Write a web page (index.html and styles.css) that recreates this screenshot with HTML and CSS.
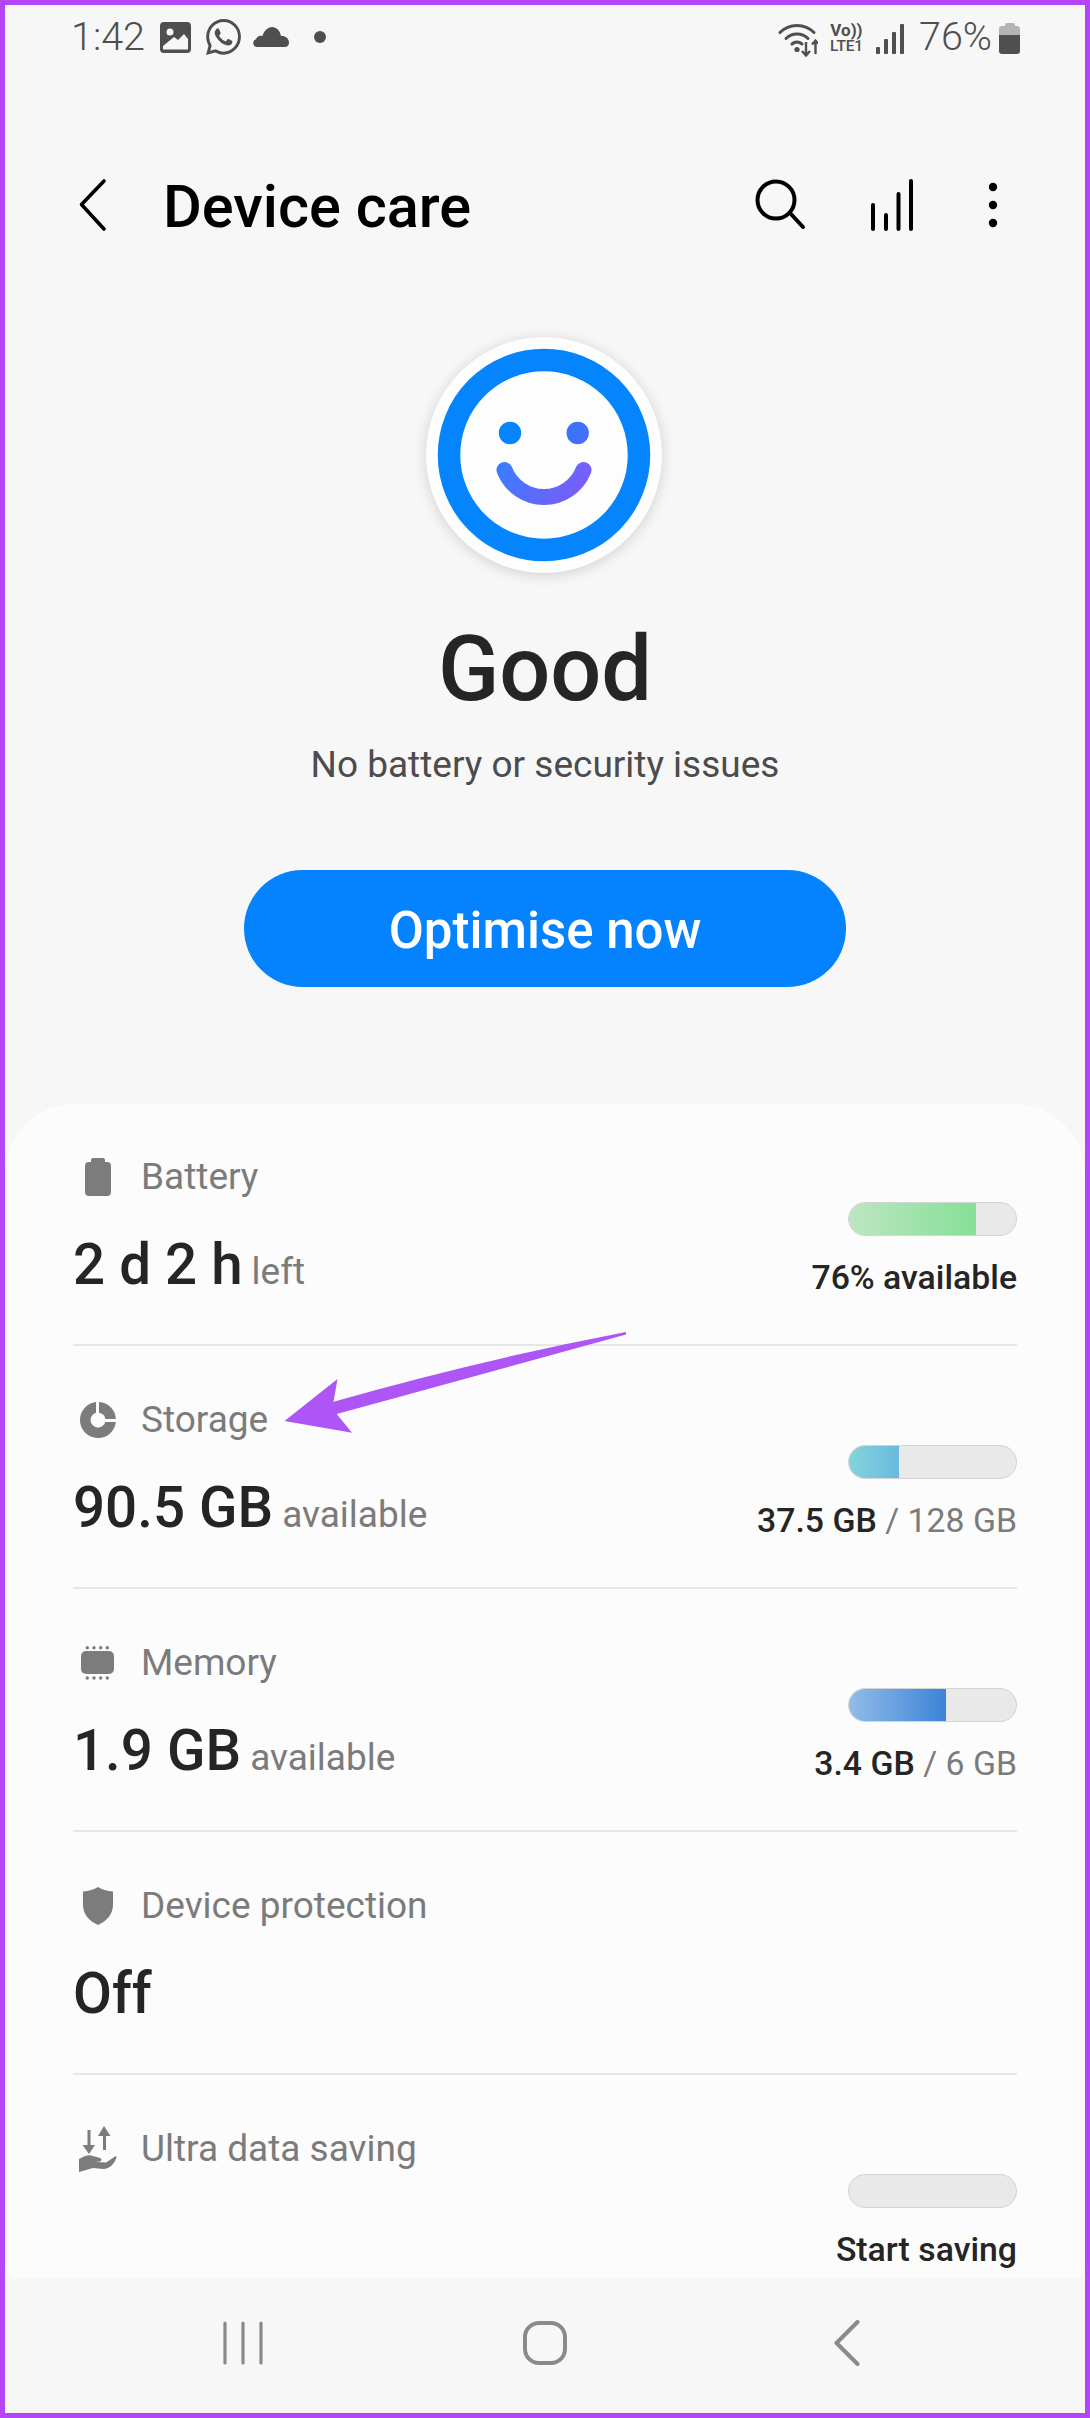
FILE: index.html
```html
<!DOCTYPE html>
<html lang="en">
<head>
<meta charset="utf-8">
<title>Device care</title>
<link rel="stylesheet" href="styles.css">
</head>
<body>
<div class="frame">
  <div class="status">
    <span class="clock">1:42</span>
    <svg class="st-image" width="31" height="31" viewBox="0 0 31 31"><path fill="#4f4f4f" fill-rule="evenodd" d="M4 0h23a4 4 0 0 1 4 4v23a4 4 0 0 1-4 4H4a4 4 0 0 1-4-4V4a4 4 0 0 1 4-4zM3 27.500h25V17l-4-5-6 6-4-3-11 9zM10 6.500a3.500 3.500 0 1 0 0 7 3.500 3.500 0 0 0 0-7z"/></svg>
    <svg class="st-wa" width="35" height="36" viewBox="0 0 24 24" preserveAspectRatio="none"><path fill="#4f4f4f" d="M17.472 14.382c-.297-.149-1.758-.867-2.03-.967-.273-.099-.471-.148-.67.15-.197.297-.767.966-.94 1.164-.173.199-.347.223-.644.075-.297-.15-1.255-.463-2.39-1.475-.883-.788-1.48-1.761-1.653-2.059-.173-.297-.018-.458.13-.606.134-.133.298-.347.446-.52.149-.174.198-.298.298-.497.099-.198.05-.371-.025-.52-.075-.149-.669-1.612-.916-2.207-.242-.579-.487-.5-.669-.51-.173-.008-.371-.01-.57-.01-.198 0-.52.074-.792.372-.272.297-1.04 1.016-1.04 2.479 0 1.462 1.065 2.875 1.213 3.074.149.198 2.096 3.2 5.077 4.487.709.306 1.262.489 1.694.625.712.227 1.36.195 1.871.118.571-.085 1.758-.719 2.006-1.413.248-.694.248-1.289.173-1.413-.074-.124-.272-.198-.57-.347m-5.421 7.403h-.004a9.87 9.87 0 01-5.031-1.378l-.361-.214-3.741.982.998-3.648-.235-.374a9.86 9.86 0 01-1.51-5.26c.001-5.45 4.436-9.884 9.888-9.884 2.64 0 5.122 1.03 6.988 2.898a9.825 9.825 0 012.893 6.994c-.003 5.45-4.437 9.884-9.885 9.884m8.413-18.297A11.815 11.815 0 0012.05 0C5.495 0 .16 5.335.157 11.892c0 2.096.547 4.142 1.588 5.945L.057 24l6.305-1.654a11.882 11.882 0 005.683 1.448h.005c6.554 0 11.89-5.335 11.893-11.893a11.821 11.821 0 00-3.48-8.413z"/></svg>
    <svg class="st-cloud" width="36" height="20" viewBox="0 0 36 20"><path fill="#4f4f4f" d="M4 20a4 4 0 0 1-1-7.800C4 9 7 8 9.500 9 11 3.500 15 0 19 0c4.500 0 8 3.500 9 9 4-.5 7.500 2 8 6 .3 3-1.500 5-4 5z"/></svg>
    <span class="st-dot"></span>
    <div class="status-right">
      <svg class="st-wifi" width="40" height="34" viewBox="0 0 40 34"><g fill="none" stroke="#4f4f4f" stroke-width="3" stroke-linecap="round"><path d="M2 9.500C11 0 27 0 36 9.500"/><path d="M8 15.500c6-6 16-6 22 0"/><path d="M14 21c3-2.600 7-2.600 10 0"/></g><circle cx="19" cy="26.500" r="2.600" fill="#4f4f4f"/><g fill="none" stroke="#4f4f4f" stroke-width="2.400"><path d="M28 19v13M24 28l4 4.500 4-4.500"/><path d="M37.500 31V18M34 21.500l3.500-4 2.500 3"/></g></svg>
      <div class="st-net"><span class="st-vo">Vo))</span><span class="st-lte">LTE1</span></div>
      <div class="st-signal"><i class="sb1"></i><i class="sb2"></i><i class="sb3"></i><i class="sb4"></i></div>
      <span class="pct">76%</span>
      <div class="st-batt"><span class="st-batt-cap"></span><span class="st-batt-body"></span></div>
    </div>
  </div>

  <div class="appbar">
    <svg class="ab-back" width="30" height="54" viewBox="0 0 30 54"><path d="M26 3 3.500 26.500 26 51" fill="none" stroke="#000" stroke-width="3.600" stroke-linecap="round" stroke-linejoin="round"/></svg>
    <h1 class="ab-title">Device care</h1>
    <div class="ab-actions">
      <svg width="52" height="52" viewBox="0 0 52 52"><circle cx="21" cy="21" r="18.500" fill="none" stroke="#000" stroke-width="4"/><path d="M35 34l13 14" stroke="#000" stroke-width="4" stroke-linecap="round"/></svg>
      <svg class="ab-bars" width="44" height="52" viewBox="0 0 44 52"><g stroke="#000" stroke-width="4" stroke-linecap="round"><path d="M3 26v24M16 36v14M28.500 15v35M41 2v48"/></g></svg>
      <svg class="ab-more" width="10" height="46" viewBox="0 0 10 46"><circle cx="5" cy="5" r="4.200"/><circle cx="5" cy="23" r="4.200"/><circle cx="5" cy="41" r="4.200"/></svg>
    </div>
  </div>

  <div class="hero">
    <div class="face">
      <svg width="236" height="236" viewBox="0 0 236 236">
        <defs>
          <linearGradient id="smile" gradientUnits="userSpaceOnUse" x1="70" y1="110" x2="170" y2="170">
            <stop offset="0" stop-color="#2f82ff"/>
            <stop offset="1" stop-color="#8a55fa"/>
          </linearGradient>
          <linearGradient id="eye" gradientUnits="userSpaceOnUse" x1="100" y1="90" x2="165" y2="100">
            <stop offset="0" stop-color="#0585fd"/>
            <stop offset="1" stop-color="#4f6cfc"/>
          </linearGradient>
        </defs>
        <circle cx="118" cy="118" r="95" fill="none" stroke="#0585fd" stroke-width="22.500"/>
        <circle cx="84" cy="96" r="11.200" fill="#0585fd"/>
        <circle cx="151.700" cy="96" r="11.200" fill="url(#eye)"/>
        <path d="M78.500 133A42.400 42.400 0 0 0 157.500 133" fill="none" stroke="url(#smile)" stroke-width="16" stroke-linecap="round"/>
      </svg>
    </div>
    <div class="hero-title">Good</div>
    <div class="hero-sub">No battery or security issues</div>
    <button class="cta" type="button">Optimise now</button>
  </div>

  <div class="card">
    <div class="row">
      <div class="info">
        <div class="head">
          <span class="ico"><svg width="26" height="38" viewBox="0 0 26 38"><path fill="#7c7c7c" d="M8 0h10a2 2 0 0 1 2 2v2h2a4 4 0 0 1 4 4v26a4 4 0 0 1-4 4H4a4 4 0 0 1-4-4V8a4 4 0 0 1 4-4h2V2a2 2 0 0 1 2-2z"/></svg></span>
          <span class="label">Battery</span>
        </div>
        <div class="value"><b>2 d 2 h</b><span>left</span></div>
      </div>
      <div class="meter">
        <div class="bar"><div class="fill fill-green bw-76"></div></div>
        <div class="meter-text"><b>76% available</b></div>
      </div>
    </div>

    <div class="row">
      <div class="info">
        <div class="head">
          <span class="ico"><svg width="36" height="36" viewBox="0 0 36 36"><path fill="#7c7c7c" d="M16 .100V10.700A7.500 7.500 0 1 0 25.300 20H35.900A18 18 0 1 1 16 .100z"/><path fill="#7c7c7c" d="M19 .100A17.500 17.500 0 0 1 35.800 17H25.300A7.500 7.500 0 0 0 19 10.700z"/></svg></span>
          <span class="label">Storage</span>
        </div>
        <div class="value"><b>90.5 GB</b><span>available</span></div>
      </div>
      <div class="meter">
        <div class="bar"><div class="fill fill-teal bw-30"></div></div>
        <div class="meter-text"><b>37.5 GB</b> / 128 GB</div>
      </div>
    </div>

    <div class="row">
      <div class="info">
        <div class="head">
          <span class="ico"><svg width="34" height="34" viewBox="0 0 34 34"><rect x="0" y="5" width="33" height="23" rx="5" fill="#7c7c7c"/><g fill="#7c7c7c"><circle cx="6.300" cy="1.700" r="1.700"/><circle cx="13" cy="1.700" r="1.700"/><circle cx="19.700" cy="1.700" r="1.700"/><circle cx="26.300" cy="1.700" r="1.700"/><circle cx="6.300" cy="32" r="1.700"/><circle cx="13" cy="32" r="1.700"/><circle cx="19.700" cy="32" r="1.700"/><circle cx="26.300" cy="32" r="1.700"/></g></svg></span>
          <span class="label">Memory</span>
        </div>
        <div class="value"><b>1.9 GB</b><span>available</span></div>
      </div>
      <div class="meter">
        <div class="bar"><div class="fill fill-blue bw-58"></div></div>
        <div class="meter-text"><b>3.4 GB</b> / 6 GB</div>
      </div>
    </div>

    <div class="row">
      <div class="info">
        <div class="head">
          <span class="ico"><svg width="30" height="38" viewBox="0 0 30 38"><path fill="#7c7c7c" d="M15 0c4 2.500 9 4 15 4.500V18c0 9-6 16-15 20C6 34 0 27 0 18V4.500C6 4 11 2.500 15 0z"/></svg></span>
          <span class="label">Device protection</span>
        </div>
        <div class="value"><b>Off</b></div>
      </div>
    </div>

    <div class="row">
      <div class="info">
        <div class="head">
          <span class="ico"><svg width="38" height="46" viewBox="0 0 38 46"><g fill="#7c7c7c"><path d="M8.500 4h3v15h4.500l-6 9-6.500-9h5z"/><path d="M25 0l6.500 10H27v14h-3V10h-5z"/><path d="M0 33l6-3c3-1.200 6-1 8 0l7 2c2 .6 2 3 0 3.500l-4 .5 10 .5 9-6c1-.6 1.800.2 1.400 1.200C36 36 33 40 29 42c-5 2-10 0-15 0l-14 4z"/></g></svg></span>
          <span class="label">Ultra data saving</span>
        </div>
      </div>
      <div class="meter">
        <div class="bar"></div>
        <div class="meter-text"><b>Start saving</b></div>
      </div>
    </div>
  </div>

  <div class="nav">
    <svg width="40" height="44" viewBox="0 0 40 44"><g stroke="#8a8a8a" stroke-width="3.200" stroke-linecap="round"><path d="M2 2v40M20 2v40M38 2v40"/></g></svg>
    <svg width="44" height="44" viewBox="0 0 44 44"><rect x="2" y="2" width="40" height="40" rx="14" fill="none" stroke="#8a8a8a" stroke-width="4"/></svg>
    <svg class="nav-back" width="26" height="46" viewBox="0 0 26 46"><path d="M23.500 2 2.500 23 23.500 44" fill="none" stroke="#8a8a8a" stroke-width="4" stroke-linecap="round" stroke-linejoin="round"/></svg>
  </div>

  <svg class="callout" width="350" height="110" viewBox="0 0 350 110"><path fill="#ae55f5" d="M346 2Q200 30 53.500 71.700L57.500 49 4.500 91 72 102.700 56.700 84Q210 42 346 4.500z"/></svg>
</div>
</body>
</html>
```

FILE: styles.css
```css
* { box-sizing: border-box; }
html, body { margin: 0; padding: 0; }
body { width: 1090px; height: 2418px; font-family: Roboto, "Liberation Sans", sans-serif; }

.frame {
  position: relative;
  width: 1090px;
  height: 2418px;
  border: 5px solid #b545fb;
  background: #f7f7f7;
  display: flex;
  flex-direction: column;
  overflow: hidden;
}

/* status bar */
.status {
  display: flex;
  align-items: center;
  height: 64px;
  padding: 0 65px 0 66px;
  color: #4f4f4f;
}
.clock { font-size: 39.500px; font-weight: 300; line-height: 40px; }
.st-image { margin-left: 15px; margin-top: 1px; }
.st-wa { margin-left: 15px; }
.st-cloud { margin-left: 12px; }
.st-dot { width: 12px; height: 12px; border-radius: 50%; background: #4f4f4f; margin-left: 25px; }
.status-right { display: flex; align-items: center; margin-left: auto; }
.st-wifi { margin-top: 5px; }
.st-net { display: flex; flex-direction: column; align-items: center; width: 37px; margin-left: 10px; font-weight: 700; }
.st-vo { font-size: 17px; line-height: 18px; }
.st-lte { font-size: 15.500px; line-height: 15px; letter-spacing: -.2px; font-weight: 500; }
.st-signal { display: flex; align-items: flex-end; gap: 4px; height: 30px; margin-left: 11px; margin-top: 3px; }
.st-signal i { display: block; width: 4px; background: #4f4f4f; border-radius: 1px; }
.sb1 { height: 7px; }
.sb2 { height: 15px; }
.sb3 { height: 22px; }
.sb4 { height: 30px; }
.pct { font-size: 39.500px; font-weight: 300; line-height: 40px; margin-left: 15px; }
.st-batt { display: flex; flex-direction: column; align-items: center; margin-left: 7px; margin-top: 2px; }
.st-batt-cap { width: 10px; height: 3px; background: #b4b4b4; border-radius: 2px 2px 0 0; }
.st-batt-body { width: 21px; height: 28px; border-radius: 3px; background: linear-gradient(#b4b4b4 0 9px, #4f4f4f 9px); }

/* app bar */
.appbar {
  display: flex;
  align-items: center;
  height: 120px;
  margin-top: 76px;
  padding: 0 87px 0 73px;
}
.ab-title { margin: 4px 0 0 55px; font-size: 59.500px; font-weight: 500; line-height: 64px; color: #000; }
.ab-actions { display: flex; align-items: center; margin-left: auto; }
.ab-bars { margin-left: 63px; }
.ab-more { margin-left: 74px; }

/* hero */
.hero { display: flex; flex-direction: column; align-items: center; margin-top: 72px; }
.face {
  width: 236px;
  height: 236px;
  margin-right: 2px;
  border-radius: 50%;
  background: #fdfdfd;
  box-shadow: 0 2px 14px rgba(0, 0, 0, .16);
}
.face svg { display: block; }
.hero-title { margin-top: 47px; font-size: 90px; font-weight: 500; line-height: 100px; color: #252525; }
.hero-sub { margin-top: 23px; font-size: 37px; line-height: 44px; color: #4c4c4c; }
.cta {
  width: 602px;
  height: 117px;
  margin-top: 83px;
  padding: 4px 0 0;
  border: 0;
  border-radius: 59px;
  background: #0582fd;
  color: #fff;
  font-family: inherit;
  font-size: 51px;
  font-weight: 500;
}

/* card */
.card {
  flex: 1;
  min-height: 0;
  margin-top: 117px;
  padding: 0 68px;
  background: #fcfcfc;
  border-radius: 70px 70px 12px 12px;
  overflow: hidden;
}
.row {
  display: flex;
  justify-content: space-between;
  height: 243px;
  border-bottom: 2px solid #e6e6e6;
}
.row:first-child { margin-top: -1px; }
.row:last-child { border-bottom: 0; }
.info { padding-top: 52px; }
.head { display: flex; align-items: center; height: 44px; }
.ico { display: flex; align-items: center; justify-content: center; width: 40px; margin-left: 5px; margin-right: 23px; }
.label { font-size: 37px; line-height: 44px; color: #7b7b7b; }
.value { display: flex; align-items: baseline; gap: 9px; margin-top: 34px; line-height: 64px; color: #252525; }
.value b { font-size: 56.500px; font-weight: 500; }
.value span { font-size: 37px; color: #7b7b7b; }
.meter { display: flex; flex-direction: column; align-items: flex-end; padding-top: 99px; }
.bar {
  width: 169px;
  height: 34px;
  border: 1.500px solid #d4d4d4;
  border-radius: 17px;
  background: #e9e9e9;
  overflow: hidden;
}
.fill { height: 100%; }
.bw-76 { width: 76%; }
.bw-30 { width: 30%; }
.bw-58 { width: 58%; }
.fill-green { background: linear-gradient(90deg, #bde6c0, #86df98); }
.fill-teal { background: linear-gradient(90deg, #84d4da, #68bade); }
.fill-blue { background: linear-gradient(90deg, #92bbe9, #3c84d8); }
.meter-text { margin-top: 20px; font-size: 33.800px; line-height: 44px; color: #7b7b7b; white-space: nowrap; }
.meter-text b { font-weight: 500; color: #252525; }

/* navigation */
.nav {
  display: grid;
  grid-template-columns: repeat(3, 302px);
  justify-content: center;
  justify-items: center;
  align-items: center;
  height: 135px;
  padding-bottom: 5px;
}

/* annotation arrow over the content */
.callout { position: absolute; left: 275px; top: 1325px; }
```
